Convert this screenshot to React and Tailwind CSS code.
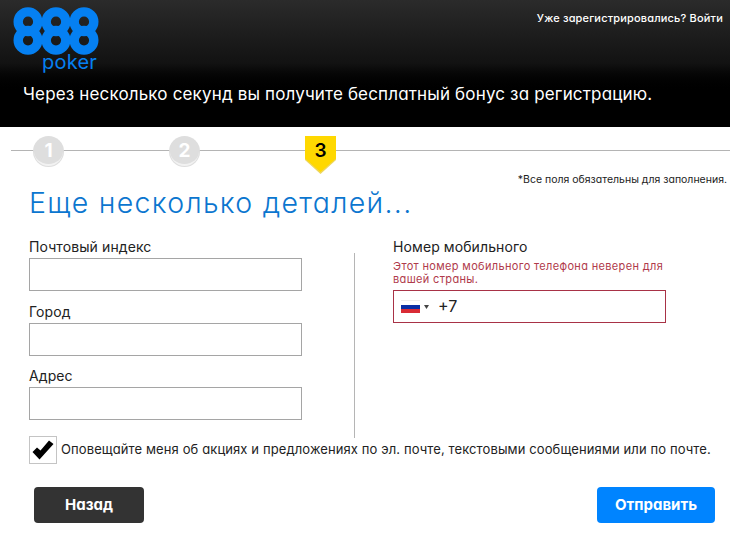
import React, { useState } from 'react';

const fields = [
  { id: 'zip', label: 'Почтовый индекс' },
  { id: 'city', label: 'Город' },
  { id: 'address', label: 'Адрес' },
];

const Logo = () => (
  <svg className="block w-[88px] h-[49px]" viewBox="0 0 88 49" fill="none">
    {[16, 44, 72].map((x) => (
      <g key={x} stroke="#0580f2" strokeWidth="9.4">
        <circle cx={x} cy="15.7" r="9.8" />
        <circle cx={x} cy="34.3" r="9.8" />
      </g>
    ))}
  </svg>
);

const Step = ({ number }) => (
  <div className="w-[31px] h-[31px] rounded-full bg-[#dedede] p-px">
    <div className="w-[29px] h-[29px] rounded-full border-b-2 border-[#f2f2f2] pt-[2px] flex items-center justify-center text-white text-[19px] font-bold">
      {number}
    </div>
  </div>
);

const ActiveStep = ({ number }) => (
  <div className="relative w-[31px] h-[38px]">
    <svg className="absolute inset-0" width="31" height="38" viewBox="0 0 31 38">
      <path d="M0 0H31V24L15.5 38L0 24Z" fill="#eed65c" />
      <path d="M0 0H31V22.5L15.5 36L0 22.5Z" fill="#ffd800" />
    </svg>
    <span className="relative block text-center text-[19px] leading-[30px] font-semibold text-black">
      {number}
    </span>
  </div>
);

const App = () => {
  const [values, setValues] = useState({ zip: '', city: '', address: '' });
  const [phone, setPhone] = useState('+7');
  const [subscribed, setSubscribed] = useState(true);

  const handleChange = (id, value) => {
    setValues({ ...values, [id]: value });
  };

  return (
    <div className="w-[730px] h-[533px] overflow-hidden bg-white text-[#222] font-['Inter','Noto_Sans',sans-serif] [font-feature-settings:'cv11']">
      {/* Header */}
      <header className="h-[127px] bg-linear-to-b from-[#2b2b2b] via-[#121212] via-50% to-black to-75% text-white">
        <div className="flex justify-between h-[81px]">
          <div className="w-[88px] ml-3 pt-1.5">
            <Logo />
            <div className="-mt-[5px] pr-[3px] text-right text-[20px] leading-[24px] tracking-[0.2px] text-[#0580f2]">poker</div>
          </div>
          <a href="#" className="mt-[10px] mr-[7px] text-[11px] leading-4 font-medium tracking-[0.17px] whitespace-nowrap">
            Уже зарегистрировались? Войти
          </a>
        </div>
        <p className="pl-[23px] text-[17px] leading-[26px] tracking-[0.16px] whitespace-nowrap">
          Через несколько секунд вы получите бесплатный бонус за регистрацию.
        </p>
      </header>

      {/* Steps */}
      <div className="relative h-[47px] pt-[9px]">
        <div className="absolute left-[11px] right-0 top-[23px] h-px bg-[#b4b4b4]" />
        <div className="relative flex items-start gap-[105px] pl-[33px]">
          <Step number={1} />
          <Step number={2} />
          <ActiveStep number={3} />
        </div>
      </div>

      <p className="h-[12px] pr-[3px] text-right text-[10.5px] leading-[12px]">*Все поля обязательны для заполнения.</p>
      <h1 className="pl-[29px] h-[50px] text-[28.5px] leading-[33px] font-light tracking-[1.3px] text-[#0b76cf] whitespace-nowrap">
        Еще несколько деталей...
      </h1>

      {/* Form */}
      <div className="flex h-[200px] pl-[29px]">
        <div className="w-[273px]">
          {fields.map((field) => (
            <div key={field.id} className="h-[64.5px]">
              <label htmlFor={field.id} className="block h-[22px] text-[14px] leading-[22px] tracking-[0.1px]">
                {field.label}
              </label>
              <input
                id={field.id}
                value={values[field.id]}
                onChange={(e) => handleChange(field.id, e.target.value)}
                className="block w-[273px] h-[33px] border border-[#a5a5a5] px-2"
              />
            </div>
          ))}
        </div>

        <div className="ml-[52px] mt-[17px] w-px h-[185px] bg-[#b5b5b5]" />

        <div className="ml-[38px] w-[273px]">
          <label htmlFor="phone" className="block h-[22px] text-[14px] leading-[22px] tracking-[0.1px]">
            Номер мобильного
          </label>
          <p className="pt-[2px] h-[32px] text-[11px] leading-[13px] tracking-[0.34px] text-[#b03a4b] whitespace-nowrap">
            Этот номер мобильного телефона неверен для
            <br />
            вашей страны.
          </p>
          <div className="flex items-center h-[33px] border border-[#a83246] pl-[7px]">
            <div className="w-[19px] h-[13px] flex flex-col">
              <div className="h-[5px] border-t border-[#eee] bg-white" />
              <div className="h-[4px] bg-[#0a2fa5]" />
              <div className="h-[4px] bg-[#d92b35]" />
            </div>
            <svg className="ml-[4px]" width="5" height="4" viewBox="0 0 5 4">
              <path d="M0 0H5L2.5 4Z" fill="#444" />
            </svg>
            <input
              id="phone"
              value={phone}
              onChange={(e) => setPhone(e.target.value)}
              className="ml-[9px] w-[200px] pb-[2px] text-[16px] outline-none"
            />
          </div>
        </div>
      </div>

      {/* Subscription */}
      <div className="flex h-[28px] pl-[29px]">
        <button
          onClick={() => setSubscribed(!subscribed)}
          className="w-[28px] h-[28px] border border-[#c4c4c4] flex items-center justify-center"
        >
          {subscribed && (
            <svg width="22" height="20" viewBox="0 0 22 20">
              <path d="M0.5 12L5 7.5L8.5 10.5L17 0.5L21.5 4L7.5 19.5Z" fill="#000" />
            </svg>
          )}
        </button>
        <span className="ml-[4px] text-[13px] leading-[27px] tracking-[0.11px] whitespace-nowrap">
          Оповещайте меня об акциях и предложениях по эл. почте, текстовыми сообщениями или по почте.
        </span>
      </div>

      {/* Actions */}
      <div className="flex justify-between pt-[23px] pl-[34px] pr-[15px]">
        <button className="w-[110px] h-[36px] rounded-[4px] bg-[#333] text-white text-[15px] font-bold">
          Назад
        </button>
        <button className="w-[118px] h-[36px] rounded-[4px] bg-[#0084ff] text-white text-[15px] font-bold">
          Отправить
        </button>
      </div>
    </div>
  );
};

export default App;
